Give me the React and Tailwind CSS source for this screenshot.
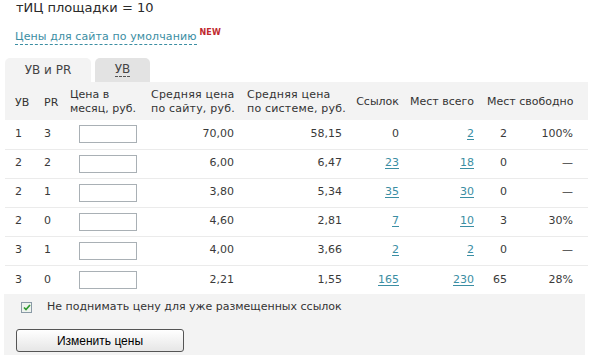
import React from "react";

const rows = [
  { uv: "1", pr: "3", site: "70,00", sys: "58,15", links: "0", linkA: false, total: "2", free: "2", pct: "100%" },
  { uv: "2", pr: "2", site: "6,00", sys: "6,47", links: "23", linkA: true, total: "18", free: "0", pct: "—" },
  { uv: "2", pr: "1", site: "3,80", sys: "5,34", links: "35", linkA: true, total: "30", free: "0", pct: "—" },
  { uv: "2", pr: "0", site: "4,60", sys: "2,81", links: "7", linkA: true, total: "10", free: "3", pct: "30%" },
  { uv: "3", pr: "1", site: "4,00", sys: "3,66", links: "2", linkA: true, total: "2", free: "0", pct: "—" },
  { uv: "3", pr: "0", site: "2,21", sys: "1,55", links: "165", linkA: true, total: "230", free: "65", pct: "28%" },
];

function L({ children }) {
  return <a className="text-[#3b8ea3] underline underline-offset-2 decoration-[#3b8ea3]">{children}</a>;
}

export default function App() {
  return (
    <div className="w-[592px] h-[361px] bg-white font-['DejaVu_Sans',sans-serif] text-[11px] text-[#3a3a3a] overflow-hidden">
      <div className="pl-[16px] pt-0 h-[16px] leading-[15px] text-[13px] text-[#2a2a2a]">тИЦ площадки = 10</div>
      <div className="pl-[15px] mt-[14px] h-[16px] leading-[15px] text-[11px] tracking-[0.1px] flex items-start">
        <span className="text-[#3b8ea3] border-b border-dashed border-[#3b8ea3] leading-[14px]">Цены для сайта по умолчанию</span>
        <span className="ml-[3px] -mt-[1px] text-[8px] font-bold text-[#c0282e] leading-none">NEW</span>
      </div>
      <div className="flex items-end gap-[4px] pl-[5px] mt-[12px] h-[24px]">
        <div className="w-[86px] h-[24px] bg-[#f3f3f3] rounded-t-[5px] flex items-center justify-center text-[12px] text-[#444]">УВ и PR</div>
        <div className="w-[55px] h-[24px] bg-[#e3e3e3] rounded-t-[5px] flex items-center justify-center text-[12px] text-[#444]">
          <span className="border-b border-dashed border-[#555] leading-[13px]">УВ</span>
        </div>
      </div>
      <table className="ml-[5px] w-[583px] table-fixed border-collapse">
        <colgroup>
          <col className="w-[33px]" />
          <col className="w-[28px]" />
          <col className="w-[80px]" />
          <col className="w-[94px]" />
          <col className="w-[108px]" />
          <col className="w-[57px]" />
          <col className="w-[75px]" />
          <col className="w-[33px]" />
          <col className="w-[75px]" />
        </colgroup>
        <thead>
          <tr className="h-[38px] bg-[#f3f3f3] text-left leading-[14px] text-[#333]">
            <th className="font-normal pl-[10px] pt-[4px]">УВ</th>
            <th className="font-normal pl-[6px] pt-[4px]">PR</th>
            <th className="font-normal pl-[4px] pt-[1px] whitespace-nowrap">Цена в<br />месяц, руб.</th>
            <th className="font-normal pl-[5px] pt-[1px] whitespace-nowrap tracking-[0.2px]">Средняя цена<br />по сайту, руб.</th>
            <th className="font-normal pl-[7px] pt-[1px] whitespace-nowrap tracking-[0.2px]">Средняя цена<br />по системе, руб.</th>
            <th className="font-normal text-right pr-[6px] pt-[1px] whitespace-nowrap">Ссылок</th>
            <th className="font-normal text-right pr-[6px] pt-[1px] whitespace-nowrap">Мест всего</th>
            <th colSpan={2} className="font-normal pl-[7px] pt-[1px] whitespace-nowrap">Мест свободно</th>
          </tr>
        </thead>
        <tbody>
          {rows.map((r, i) => (
            <tr key={i} className={"h-[29px] " + (i < rows.length - 1 ? "border-b border-[#ebebeb]" : "")}>
              <td className="pl-[10px]">{r.uv}</td>
              <td className="pl-[6px]">{r.pr}</td>
              <td className="pl-[13px]">
                <div className="w-[58px] h-[18px] border border-[#a9b0b5] bg-white"></div>
              </td>
              <td className="text-right pr-[6px]">{r.site}</td>
              <td className="text-right pr-[6px]">{r.sys}</td>
              <td className="text-right pr-[6px]">{r.linkA ? <L>{r.links}</L> : r.links}</td>
              <td className="text-right pr-[6px]"><L>{r.total}</L></td>
              <td className="text-right pr-[6px]">{r.free}</td>
              <td className="text-right pr-[15px]">{r.pct}</td>
            </tr>
          ))}
        </tbody>
      </table>
      <div className="ml-[4px] w-[581px] h-[61px] bg-[#f3f3f3] pt-[7px]">
        <div className="flex items-center pl-[17px] h-[13px]">
          <div className="w-[11px] h-[11px] border border-[#8a9aa6] bg-[#eef3ee] flex items-center justify-center">
            <svg width="8" height="7" viewBox="0 0 8 7">
              <path d="M1 3.5 L3 5.5 L7 1" fill="none" stroke="#2f9a2f" strokeWidth="1.7" />
            </svg>
          </div>
          <span className="ml-[15px] text-[11px] text-[#333]">Не поднимать цену для уже размещенных ссылок</span>
        </div>
        <button className="ml-[12px] mt-[15px] w-[168px] h-[23px] rounded-[3px] border border-[#555] bg-gradient-to-b from-white to-[#e6e6e6] font-['Liberation_Sans',sans-serif] text-[12px] text-black">
          Изменить цены
        </button>
      </div>
    </div>
  );
}
